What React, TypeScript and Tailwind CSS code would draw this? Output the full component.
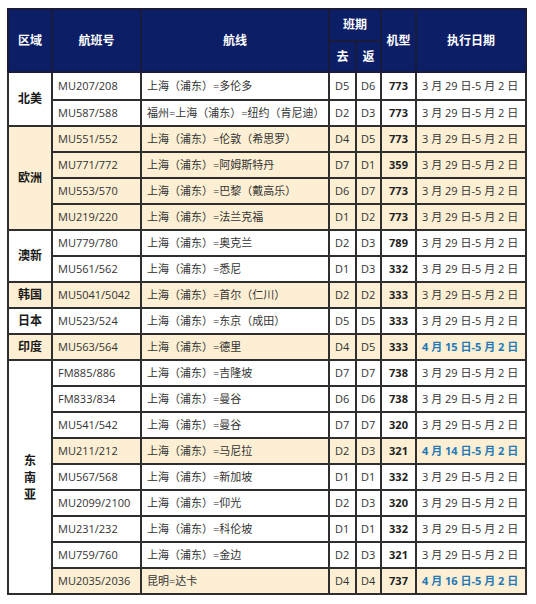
import React from 'react';

type Row = {
  flight: string;
  route: string;
  go: string;
  back: string;
  plane: string;
  date?: string;
  hl?: boolean;
  blue?: boolean;
};

type Group = {
  region: string;
  hl: boolean;
  vertical?: boolean;
  rows: Row[];
};

const D = '3 月 29 日-5 月 2 日';

const groups: Group[] = [
  {
    region: '北美',
    hl: false,
    rows: [
      { flight: 'MU207/208', route: '上海（浦东）=多伦多', go: 'D5', back: 'D6', plane: '773' },
      { flight: 'MU587/588', route: '福州=上海（浦东）=纽约（肯尼迪）', go: 'D2', back: 'D3', plane: '773' },
    ],
  },
  {
    region: '欧洲',
    hl: true,
    rows: [
      { flight: 'MU551/552', route: '上海（浦东）=伦敦（希思罗）', go: 'D4', back: 'D5', plane: '773', hl: true },
      { flight: 'MU771/772', route: '上海（浦东）=阿姆斯特丹', go: 'D7', back: 'D1', plane: '359', hl: true },
      { flight: 'MU553/570', route: '上海（浦东）=巴黎（戴高乐）', go: 'D6', back: 'D7', plane: '773', hl: true },
      { flight: 'MU219/220', route: '上海（浦东）=法兰克福', go: 'D1', back: 'D2', plane: '773', hl: true },
    ],
  },
  {
    region: '澳新',
    hl: false,
    rows: [
      { flight: 'MU779/780', route: '上海（浦东）=奥克兰', go: 'D2', back: 'D3', plane: '789' },
      { flight: 'MU561/562', route: '上海（浦东）=悉尼', go: 'D1', back: 'D3', plane: '332' },
    ],
  },
  {
    region: '韩国',
    hl: true,
    rows: [{ flight: 'MU5041/5042', route: '上海（浦东）=首尔（仁川）', go: 'D2', back: 'D2', plane: '333', hl: true }],
  },
  {
    region: '日本',
    hl: false,
    rows: [{ flight: 'MU523/524', route: '上海（浦东）=东京（成田）', go: 'D5', back: 'D5', plane: '333' }],
  },
  {
    region: '印度',
    hl: true,
    rows: [
      { flight: 'MU563/564', route: '上海（浦东）=德里', go: 'D4', back: 'D5', plane: '333', hl: true, blue: true, date: '4 月 15 日-5 月 2 日' },
    ],
  },
  {
    region: '东南亚',
    hl: false,
    vertical: true,
    rows: [
      { flight: 'FM885/886', route: '上海（浦东）=吉隆坡', go: 'D7', back: 'D7', plane: '738' },
      { flight: 'FM833/834', route: '上海（浦东）=曼谷', go: 'D6', back: 'D6', plane: '738' },
      { flight: 'MU541/542', route: '上海（浦东）=曼谷', go: 'D7', back: 'D7', plane: '320' },
      { flight: 'MU211/212', route: '上海（浦东）=马尼拉', go: 'D2', back: 'D3', plane: '321', hl: true, blue: true, date: '4 月 14 日-5 月 2 日' },
      { flight: 'MU567/568', route: '上海（浦东）=新加坡', go: 'D1', back: 'D1', plane: '332' },
      { flight: 'MU2099/2100', route: '上海（浦东）=仰光', go: 'D2', back: 'D3', plane: '320' },
      { flight: 'MU231/232', route: '上海（浦东）=科伦坡', go: 'D1', back: 'D1', plane: '332' },
      { flight: 'MU759/760', route: '上海（浦东）=金边', go: 'D2', back: 'D3', plane: '321' },
      { flight: 'MU2035/2036', route: '昆明=达卡', go: 'D4', back: 'D4', plane: '737', hl: true, blue: true, date: '4 月 16 日-5 月 2 日' },
    ],
  },
];

const cell = 'border-2 border-[#2e2e2e] p-0 align-middle';
const head = 'border-2 border-[#1a1a3a] p-0 align-middle text-center text-white font-bold text-[12px]';

export default function App() {
  return (
    <div className="bg-white min-h-[604px] pt-[8px] pl-[7px] font-['Open_Sans','Noto_Sans_CJK_SC',sans-serif] text-[11px] text-[#333]">
      <table className="table-fixed border-collapse w-[518px]">
        <colgroup>
          <col className="w-[44px]" />
          <col className="w-[89px]" />
          <col className="w-[188px]" />
          <col className="w-[27px]" />
          <col className="w-[25px]" />
          <col className="w-[35px]" />
          <col className="w-[110px]" />
        </colgroup>
        <thead className="bg-[#0b1e66]">
          <tr className="h-[32px]">
            <th rowSpan={2} className={head}>区域</th>
            <th rowSpan={2} className={head}>航班号</th>
            <th rowSpan={2} className={head}>航线</th>
            <th colSpan={2} className={head}>班期</th>
            <th rowSpan={2} className={head}>机型</th>
            <th rowSpan={2} className={head}>执行日期</th>
          </tr>
          <tr className="h-[31px]">
            <th className={head}>去</th>
            <th className={head}>返</th>
          </tr>
        </thead>
        <tbody>
          {groups.map((g, gi) =>
            g.rows.map((r, i) => {
              const bg = r.hl ? 'bg-[#fcefd3]' : 'bg-white';
              const first = gi === 0 && i === 0;
              return (
                <tr key={r.flight} className={first ? 'h-[28px]' : 'h-[26px]'}>
                  {i === 0 && (
                    <td
                      rowSpan={g.rows.length}
                      className={`${cell} text-center font-bold text-[12px] text-[#1a1a1a] ${g.hl ? 'bg-[#fcefd3]' : 'bg-white'}`}
                    >
                      {g.vertical ? (
                        <div className="flex flex-col items-center leading-[17px]">
                          {g.region.split('').map((c) => (
                            <span key={c}>{c}</span>
                          ))}
                        </div>
                      ) : (
                        g.region
                      )}
                    </td>
                  )}
                  <td className={`${cell} ${bg} pl-[5px] whitespace-nowrap`}>{r.flight}</td>
                  <td className={`${cell} ${bg} pl-[5px] whitespace-nowrap`}>{r.route}</td>
                  <td className={`${cell} ${bg} pl-[5px]`}>{r.go}</td>
                  <td className={`${cell} ${bg} pl-[4px]`}>{r.back}</td>
                  <td className={`${cell} ${bg} text-center font-bold text-[#222]`}>{r.plane}</td>
                  <td
                    className={`${cell} ${bg} pl-[5px] whitespace-nowrap ${
                      r.blue ? 'font-bold text-[#1f78b8]' : ''
                    }`}
                  >
                    {r.date ?? D}
                  </td>
                </tr>
              );
            })
          )}
        </tbody>
      </table>
    </div>
  );
}
